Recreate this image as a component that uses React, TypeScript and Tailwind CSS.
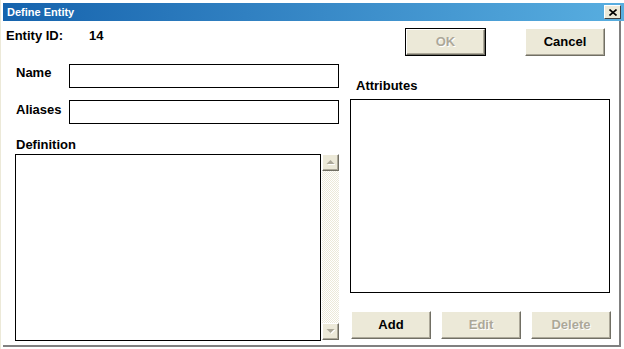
import React from "react";

function Button({
  label,
  disabled,
  isDefault,
  width = "w-[80px]",
}: {
  label: string;
  disabled?: boolean;
  isDefault?: boolean;
  width?: string;
}) {
  const face = (
    <div
      className={`flex h-full w-full items-center justify-center border-t border-l border-t-white border-l-white border-r border-b border-r-[#716f64] border-b-[#716f64] bg-[#ece9d8] shadow-[inset_-1px_-1px_0_#aca899] text-[13px] font-bold leading-[16px] ${
        disabled ? "text-[#aca899] [text-shadow:1px_1px_0_#ffffff]" : "text-black"
      }`}
    >
      {label}
    </div>
  );

  if (isDefault) {
    return (
      <div className={`h-[28px] ${width} border border-black`}>{face}</div>
    );
  }
  return <div className={`h-[28px] ${width}`}>{face}</div>;
}

function ScrollArrow({ up }: { up?: boolean }) {
  return (
    <div className="flex h-[17px] w-[17px] items-center justify-center border-t border-l border-t-white border-l-white border-r border-b border-r-[#716f64] border-b-[#716f64] bg-[#ece9d8] shadow-[inset_-1px_-1px_0_#aca899]">
      <svg width="9" height="5" viewBox="0 0 9 5">
        {up ? (
          <>
            <path d="M5.5 1 L9.5 5 L1.5 5 Z" fill="#ffffff" />
            <path d="M4.5 0 L8.5 4 L0.5 4 Z" fill="#aca899" />
          </>
        ) : (
          <>
            <path d="M1.5 1 L9.5 1 L5.5 5 Z" fill="#ffffff" />
            <path d="M0.5 0 L8.5 0 L4.5 4 Z" fill="#aca899" />
          </>
        )}
      </svg>
    </div>
  );
}

export default function App() {
  return (
    <div className="flex h-[349px] w-[624px] flex-col overflow-hidden border-l border-[#ece9d8] bg-white font-['Liberation_Sans',Arial,sans-serif] text-black">
      {/* Title bar */}
      <div className="ml-[2px] mt-[3px] flex h-[18px] w-[621px] items-center justify-between bg-gradient-to-r from-[#1563ad] to-[#58aee0]">
        <span className="pl-[4px] text-[11px] font-bold leading-[14px] text-white">
          Define Entity
        </span>
        <div className="mr-[3px] flex h-[14px] w-[17px] items-center justify-center border-t border-l border-t-white border-l-white border-r border-b border-r-[#404040] border-b-[#404040] bg-[#ece9d8]">
          <svg width="8" height="7" viewBox="0 0 8 7">
            <path
              d="M0.5 0.5 L7.5 6.5 M7.5 0.5 L0.5 6.5"
              stroke="#000"
              strokeWidth="1.6"
            />
          </svg>
        </div>
      </div>

      {/* Body */}
      <div className="mb-[2px] ml-[2px] mr-[3px] flex flex-1 border-r-2 border-b-2 border-[#808080]">
        {/* Left column */}
        <div className="flex w-[336px] flex-col">
          <div className="mt-[7px] flex h-[16px] text-[13px] font-bold leading-[16px]">
            <span className="ml-[3px] w-[83px]">Entity ID:</span>
            <span>14</span>
          </div>

          <div className="mt-[20px] flex items-start">
            <span className="ml-[13px] w-[53px] pt-[1px] text-[13px] font-bold leading-[16px]">
              Name
            </span>
            <div className="h-[24px] w-[270px] border border-black bg-white" />
          </div>

          <div className="mt-[12px] flex items-start">
            <span className="ml-[13px] w-[53px] pt-[2px] text-[13px] font-bold leading-[16px]">
              Aliases
            </span>
            <div className="h-[24px] w-[270px] border border-black bg-white" />
          </div>

          <span className="ml-[13px] mt-[13px] text-[13px] font-bold leading-[16px]">
            Definition
          </span>

          <div className="ml-[12px] mt-[1px] flex">
            <div className="h-[187px] w-[307px] border border-black bg-white" />
            <div className="ml-[1px] flex h-[186px] w-[17px] flex-col">
              <ScrollArrow up />
              <div className="flex-1 bg-[repeating-conic-gradient(#ece9d8_0%_25%,#ffffff_0%_50%)] bg-size-[2px_2px]" />
              <ScrollArrow />
            </div>
          </div>
        </div>

        {/* Right column */}
        <div className="flex flex-1 flex-col">
          <div className="mt-[7px] flex">
            <div className="ml-[66px]">
              <Button label="OK" disabled isDefault width="w-[81px]" />
            </div>
            <div className="ml-[39px]">
              <Button label="Cancel" width="w-[80px]" />
            </div>
          </div>

          <span className="ml-[17px] mt-[22px] text-[13px] font-bold leading-[16px]">
            Attributes
          </span>

          <div className="ml-[11px] mt-[5px] h-[194px] w-[260px] border border-black bg-white" />

          <div className="ml-[12px] mt-[18px] flex gap-[10px]">
            <Button label="Add" />
            <Button label="Edit" disabled />
            <Button label="Delete" disabled />
          </div>
        </div>
      </div>
    </div>
  );
}
